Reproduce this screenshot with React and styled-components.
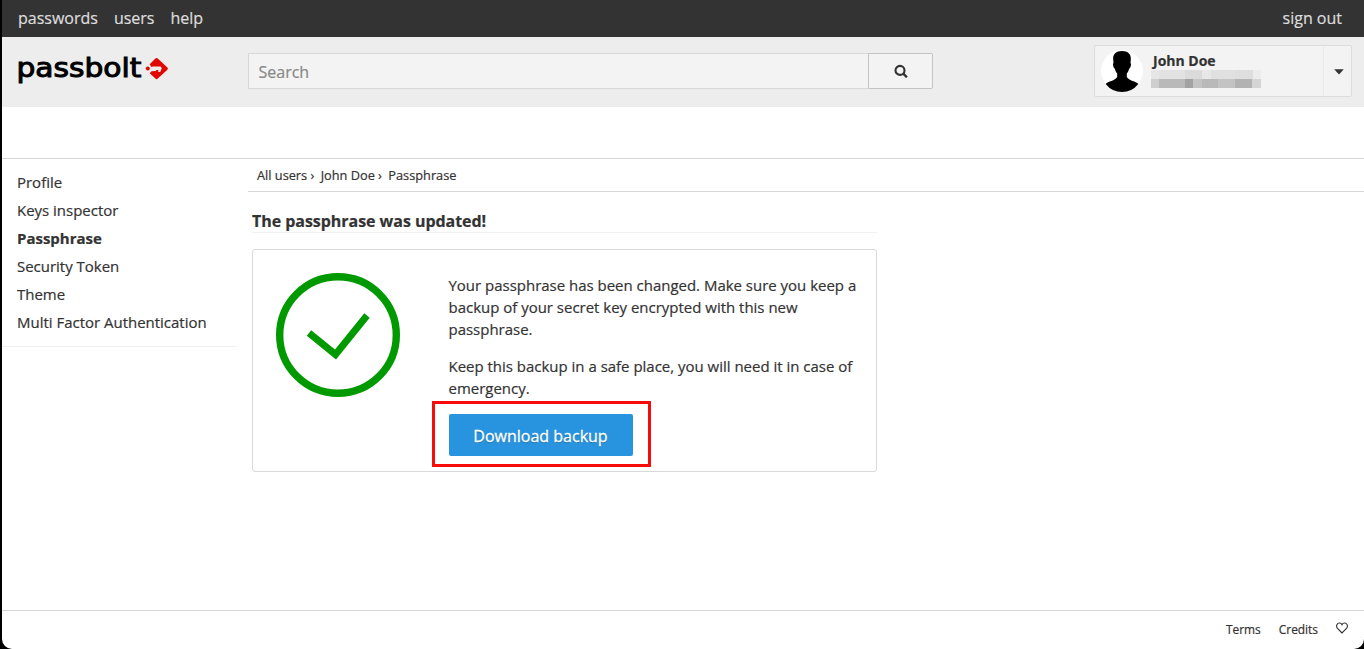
import React from "react";
import styled, { createGlobalStyle } from "styled-components";

const GlobalStyle = createGlobalStyle`
  * { box-sizing: border-box; }
  body {
    margin: 0;
    background: #000;
    color: #333;
    font-family: "Open Sans", "Noto Sans", sans-serif;
    font-size: 14.97px;
    -webkit-text-stroke: 0.2px;
    overflow: hidden;
  }
  a { color: inherit; text-decoration: none; }
`;

const Page = styled.div`
  display: flex;
  flex-direction: column;
  height: 649px;
  margin-left: 2px;
  background: #fff;
  border-radius: 0 0 10px 10px;
  overflow: hidden;
`;

const TopBar = styled.nav`
  display: flex;
  align-items: center;
  height: 37px;
  flex: none;
  gap: 16px;
  padding: 0 22px 1px 16px;
  background: #333;
  color: #ddd;
  font-size: 16px;
`;

const TopLink = styled.a`
  margin-left: ${(p) => (p.$end ? "auto" : "0")};
`;

const Header = styled.header`
  display: flex;
  align-items: flex-start;
  flex: none;
  height: 70px;
  background: #ededed;
`;

const LogoArea = styled.div`
  width: 246px;
  padding: 14px 0 0 14px;
  svg { display: block; }
`;

const SearchForm = styled.div`
  display: flex;
  width: 685px;
  height: 36px;
  margin-top: 16px;
`;

const SearchField = styled.input`
  flex: 1;
  min-width: 0;
  padding: 2px 9.5px 0;
  border: 1px solid #d7d7d7;
  border-right: 0;
  outline: none;
  background: #f3f3f3;
  font: 16px "Open Sans", sans-serif;
  &::placeholder { color: #888; opacity: 1; }
`;

const SearchButton = styled.button`
  display: flex;
  align-items: center;
  justify-content: center;
  width: 65px;
  padding: 0;
  border: 1px solid #c4c4c4;
  border-radius: 0 2px 2px 0;
  background: #f3f3f3;
`;

const UserMenu = styled.div`
  display: flex;
  width: 258px;
  height: 52px;
  margin: 8px 12px 0 auto;
  border: 1px solid #dcdcdc;
  border-radius: 2px;
  background: #f3f3f3;
`;

const Avatar = styled.svg`
  display: block;
  flex: none;
  margin: 4px 0 0 6px;
`;

const UserDetails = styled.div`
  flex: 1;
  padding: 5px 0 0 8px;
`;

const UserName = styled.div`
  height: 19px;
  padding-left: 2px;
  font-size: 14px;
  font-weight: 700;
  line-height: 20px;
`;

const MaskRow = styled.div`
  display: flex;
  height: 9px;
`;

const MaskCell = styled.span`
  width: ${(p) => p.$w}px;
  background: ${(p) => p.$c};
`;

const MenuToggle = styled.div`
  display: flex;
  align-items: center;
  justify-content: center;
  width: 28px;
  padding: 2px 0 0 2px;
  border-left: 1px solid #e9e9e9;
`;

const ActionsBar = styled.div`
  flex: none;
  height: 52px;
  border-bottom: 1px solid #d7d7d7;
`;

const Body = styled.div`
  display: flex;
  flex: 1;
  align-items: flex-start;
`;

const Sidebar = styled.ul`
  width: 235px;
  margin: 0 11px 0 0;
  padding: 9px 0 10px 15px;
  border-bottom: 1px solid #f2f2f2;
  list-style: none;
`;

const SidebarItem = styled.li`
  height: 28px;
  line-height: 28px;
  font-weight: ${(p) => (p.$active ? 700 : 400)};
`;

const Main = styled.main`
  flex: 1;
`;

const Breadcrumbs = styled.div`
  display: flex;
  height: 33px;
  padding-left: 9px;
  border-bottom: 1px solid #d7d7d7;
  font-size: 12.75px;
  line-height: 33px;
`;

const Crumb = styled.span`
  margin-right: 6.4px;
  white-space: nowrap;
`;

const Section = styled.section`
  width: 625px;
  margin-left: 4px;
`;

const Title = styled.h3`
  height: 41px;
  margin: 0 0 16px;
  padding-top: 18px;
  border-bottom: 1px solid #f0f0f0;
  font-size: 16px;
  font-weight: 700;
  line-height: 22px;
  letter-spacing: -0.04px;
`;

const Card = styled.div`
  display: flex;
  height: 223px;
  border: 1px solid #d9d9d9;
  border-radius: 3px;
`;

const Check = styled.svg`
  flex: none;
  margin: 23px 48.5px 0 23px;
`;

const Message = styled.div`
  padding-top: 24px;
  white-space: nowrap;
`;

const Paragraph = styled.p`
  margin: 0 0 15px;
  line-height: 22px;
`;

const Highlight = styled.div`
  width: 219px;
  height: 66px;
  margin: -13px 0 0 -17px;
  padding: 10px 14px;
  border: 3px solid #f80b0b;
`;

const PrimaryButton = styled.button`
  width: 184px;
  height: 42px;
  padding: 2px 0 0;
  border: 0;
  border-radius: 2px;
  background: #2894df;
  color: #fff;
  font: 16px "Open Sans", sans-serif;
  -webkit-text-stroke: 0.3px;
  text-shadow: 0 1px 1px rgba(0, 0, 0, 0.3);
`;

const Footer = styled.footer`
  display: flex;
  flex: none;
  justify-content: flex-end;
  gap: 18px;
  height: 39px;
  padding: 8px 16px 0 0;
  border-top: 1px solid #d7d7d7;
  font-size: 11.9px;
  line-height: 20px;
`;

const HeartIcon = styled.svg`
  margin-top: 3px;
`;

const MASK = [
  [[8, "#e6e6e6"], [26, "#e2e2e2"], [17, "#dadada"], [9, "#e7e7e7"], [24, "#e0e0e0"], [18, "#dedede"], [8, "#ececec"]],
  [[8, "#cecece"], [26, "#b9b9b9"], [8, "#a2a2a2"], [9, "#c3c3c3"], [16, "#b9b9b9"], [17, "#c3c3c3"], [17, "#b2b2b2"], [9, "#d5d5d5"]],
];

const NAV = ["Profile", "Keys inspector", "Passphrase", "Security Token", "Theme", "Multi Factor Authentication"];

export default function App() {
  return (
    <>
      <GlobalStyle />
      <Page>
        <TopBar>
          <TopLink>passwords</TopLink>
          <TopLink>users</TopLink>
          <TopLink>help</TopLink>
          <TopLink $end>sign out</TopLink>
        </TopBar>
        <Header>
          <LogoArea>
            <svg width="154" height="40" viewBox="16 51 154 40">
              <text x="16.4" y="77.4" textLength="125" lengthAdjust="spacingAndGlyphs" fontFamily="DejaVu Sans" fontSize="26" stroke="#000" strokeWidth="1">passbolt</text>
              <circle cx="147.8" cy="68.5" r="2" fill="#e10600" />
              <path d="M155.4 58.6 Q156.6 57.5 157.8 58.6 L167.4 67.5 Q168.5 68.6 167.4 69.7 L157.8 78.6 Q156.6 79.7 155.4 78.6 L149.7 73.2 L151.6 71.2 L155.6 71 L156.6 69.9 L158.3 69.9 L158.3 72 L160.2 72 L161.8 68.2 L160.6 66.6 L152.6 66.6 L151.6 67.3 L149.7 64.2Z" fill="#e10600" />
            </svg>
          </LogoArea>
          <SearchForm>
            <SearchField placeholder="Search" />
            <SearchButton aria-label="Search">
              <svg width="14" height="14" viewBox="0 0 14 14" fill="none" stroke="#333">
                <circle cx="6" cy="6.4" r="4.5" strokeWidth="2.1" />
                <path d="M9.3 9.7 L12.9 13.3" strokeWidth="2.4" />
              </svg>
            </SearchButton>
          </SearchForm>
          <UserMenu>
            <Avatar width="42" height="42" viewBox="0 0 42 42">
              <circle cx="21" cy="21" r="21" fill="#fff" />
              <path d="M21 1 C27 1 30.2 4 29.8 9.5 L29.5 13 Q30.5 13.5 29.8 16 Q29.3 18.3 28.2 18.8 Q27.3 22 25.8 23.6 L25.8 27 C28 31 35 31 37.3 34 Q31 42 21 42 Q11 42 4.7 34 C7 31 14 31 16.2 27 L16.2 23.6 Q14.7 22 13.8 18.8 Q12.7 18.3 12.2 16 Q11.5 13.5 12.5 13 L12.2 9.5 C11.8 4 15 1 21 1Z" fill="#000" />
            </Avatar>
            <UserDetails>
              <UserName>John Doe</UserName>
              {MASK.map((row, i) => (
                <MaskRow key={i}>
                  {row.map(([w, c], j) => <MaskCell key={j} $w={w} $c={c} />)}
                </MaskRow>
              ))}
            </UserDetails>
            <MenuToggle>
              <svg width="10" height="6" viewBox="0 0 10 6"><path d="M0.2 0.3H9.8L5 5.5Z" fill="#333" /></svg>
            </MenuToggle>
          </UserMenu>
        </Header>
        <ActionsBar />
        <Body>
          <Sidebar>
            {NAV.map((label) => (
              <SidebarItem key={label} $active={label === "Passphrase"}>{label}</SidebarItem>
            ))}
          </Sidebar>
          <Main>
            <Breadcrumbs>
              <Crumb>All users ›</Crumb>
              <Crumb>John Doe ›</Crumb>
              <Crumb>Passphrase</Crumb>
            </Breadcrumbs>
            <Section>
              <Title>The passphrase was updated!</Title>
              <Card>
                <Check width="124" height="124" viewBox="0 0 124 124" fill="none" stroke="#090">
                  <circle cx="62" cy="62" r="58.3" strokeWidth="7.4" />
                  <path d="M33 60 L59.5 81.5 L91 42.5" strokeWidth="7" />
                </Check>
                <Message>
                  <Paragraph>
                    Your passphrase has been changed. Make sure you keep a<br />
                    backup of your secret key encrypted with this new<br />
                    passphrase.
                  </Paragraph>
                  <Paragraph>
                    Keep this backup in a safe place, you will need it in case of<br />
                    emergency.
                  </Paragraph>
                  <Highlight>
                    <PrimaryButton>Download backup</PrimaryButton>
                  </Highlight>
                </Message>
              </Card>
            </Section>
          </Main>
        </Body>
        <Footer>
          <a>Terms</a>
          <a>Credits</a>
          <HeartIcon width="12" height="12" viewBox="0 0 12 12" fill="none" stroke="#333" strokeWidth="1.1">
            <path d="M6 11 L1.3 6.1 C-0.4 3.8 1.2 1 3.4 1 C4.8 1 5.6 1.8 6 2.7 C6.4 1.8 7.2 1 8.6 1 C10.8 1 12.4 3.8 10.7 6.1Z" />
          </HeartIcon>
        </Footer>
      </Page>
    </>
  );
}
